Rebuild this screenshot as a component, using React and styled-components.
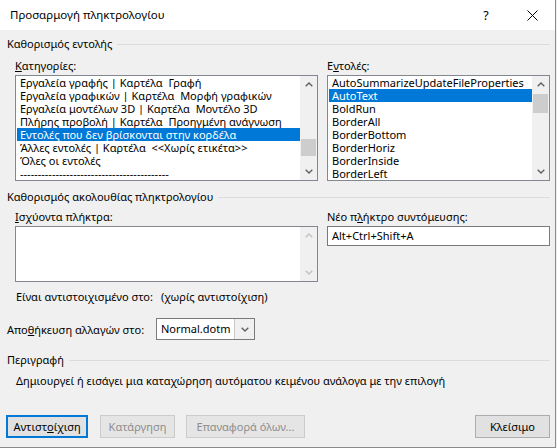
import React from 'react';
import styled, { createGlobalStyle } from 'styled-components';

const Global = createGlobalStyle`
  html, body { margin: 0; padding: 0; background: #f0f0f0; }
  body { font-family: "Noto Sans", "Open Sans", sans-serif; font-size: 11px; color: #000; }
  * { box-sizing: border-box; }
`;

const Window = styled.div`
  width: 556px;
  height: 448px;
  background: #f0f0f0;
  border-right: 1px solid #8a8a8a;
  border-bottom: 1px solid #8a8a8a;
  display: flex;
  flex-direction: column;
  overflow: hidden;
`;

const TitleBar = styled.div`
  height: 30px;
  flex: none;
  background: #fff;
  display: flex;
  align-items: center;
  padding-left: 10px;
`;

const Title = styled.div`
  flex: 1;
  font-size: 11.5px;
  line-height: 16px;
`;

const CaptionButton = styled.div`
  width: 46px;
  height: 30px;
  display: flex;
  align-items: center;
  justify-content: center;
  font-size: 12.5px;
`;

const Content = styled.div`
  flex: 1;
  display: flex;
  flex-direction: column;
  padding: 6px 5px 9px 7px;
`;

const GroupHeader = styled.div`
  display: flex;
  align-items: center;
  gap: 5px;
  height: 16px;
  line-height: 16px;
  white-space: nowrap;
  margin-top: ${p => p.$mt || 0}px;
  &::after {
    content: "";
    flex: 1;
    height: 1px;
    background: #dcdcdc;
  }
`;

const TwoCols = styled.div`
  display: grid;
  grid-template-columns: 303px 1fr;
  column-gap: 9px;
  margin-left: 8px;
  margin-top: ${p => p.$mt || 0}px;
`;

const Col = styled.div`
  display: flex;
  flex-direction: column;
`;

const FieldLabel = styled.div`
  height: 17px;
  line-height: 16px;
  white-space: nowrap;
`;

const ListBox = styled.div`
  height: ${p => p.$h}px;
  border: 1px solid #828790;
  background: #fff;
  display: flex;
`;

const Items = styled.div`
  flex: 1;
  padding: 0 0 0 1px;
  overflow: hidden;
`;

const Item = styled.div`
  height: 13px;
  line-height: 13px;
  padding-left: 3px;
  white-space: pre;
  overflow: hidden;
  background: ${p => (p.$sel ? '#0078d7' : 'transparent')};
  color: ${p => (p.$sel ? '#fff' : '#000')};
`;

const ScrollBar = styled.div`
  width: 17px;
  flex: none;
  background: #f0f0f0;
  display: flex;
  flex-direction: column;
`;

const Arrow = styled.div`
  height: 17px;
  flex: none;
  display: flex;
  align-items: center;
  justify-content: center;
`;

const Track = styled.div`
  flex: 1;
  padding: 0 1px;
`;

const Thumb = styled.div`
  height: ${p => p.$h}px;
  margin-top: ${p => p.$top}px;
  background: #cdcdcd;
`;

const TextInput = styled.div`
  height: 20px;
  border: 1px solid #7a7a7a;
  background: #fff;
  padding-left: 4px;
  line-height: 18px;
`;

const InfoRow = styled.div`
  display: grid;
  grid-template-columns: 145px 1fr;
  margin: 7px 0 0 9px;
  height: 16px;
  line-height: 16px;
  white-space: nowrap;
`;

const SaveRow = styled.div`
  display: flex;
  align-items: center;
  margin-top: 13px;
  height: 22px;
`;

const SaveLabel = styled.div`
  width: 149px;
  white-space: nowrap;
`;

const Select = styled.div`
  width: 99px;
  height: 22px;
  border: 1px solid #7a7a7a;
  background: #fff;
  display: flex;
`;

const SelectValue = styled.div`
  flex: 1;
  padding-left: 4px;
  line-height: 20px;
`;

const SelectButton = styled.div`
  width: 20px;
  border-left: 1px solid #c8c8c8;
  background: #f0f0f0;
  display: flex;
  align-items: center;
  justify-content: center;
`;

const Description = styled.div`
  margin: 5px 0 0 9px;
  height: 16px;
  line-height: 16px;
  white-space: nowrap;
`;

const ButtonRow = styled.div`
  margin-top: auto;
  display: flex;
  align-items: center;
`;

const Button = styled.div`
  width: ${p => p.$w}px;
  height: 23px;
  margin-left: ${p => p.$ml || 0}px;
  display: flex;
  align-items: center;
  justify-content: center;
  white-space: nowrap;
  background: ${p => (p.$disabled ? '#e5e5e5' : '#e1e1e1')};
  border: ${p => (p.$default ? '2px solid #0078d7' : p.$disabled ? '1px solid #cccccc' : '1px solid #adadad')};
  color: ${p => (p.$disabled ? '#8d8d8d' : '#000')};
`;

const Spacer = styled.div`
  flex: 1;
`;

const Chevron = ({ down, color = '#606060' }) => (
  <svg width="8" height="5" viewBox="0 0 8 5">
    <polyline
      points={down ? '0.7,0.8 4,4 7.3,0.8' : '0.7,4.2 4,1 7.3,4.2'}
      fill="none"
      stroke={color}
      strokeWidth="1.4"
    />
  </svg>
);

const VScroll = ({ thumbTop, thumbH, disabled }) => {
  const c = disabled ? '#c2c2c2' : '#606060';
  return (
    <ScrollBar>
      <Arrow><Chevron color={c} /></Arrow>
      <Track>{thumbH ? <Thumb $top={thumbTop} $h={thumbH} /> : null}</Track>
      <Arrow><Chevron down color={c} /></Arrow>
    </ScrollBar>
  );
};

const categories = [
  'Εργαλεία γραφής | Καρτέλα  Γραφή',
  'Εργαλεία γραφικών | Καρτέλα  Μορφή γραφικών',
  'Εργαλεία μοντέλων 3D | Καρτέλα  Μοντέλο 3D',
  'Πλήρης προβολή | Καρτέλα  Προηγμένη ανάγνωση',
  'Εντολές που δεν βρίσκονται στην κορδέλα',
  'Άλλες εντολές | Καρτέλα  <<Χωρίς ετικέτα>>',
  'Όλες οι εντολές',
  '-'.repeat(42),
];

const commands = [
  'AutoSummarizeUpdateFileProperties',
  'AutoText',
  'BoldRun',
  'BorderAll',
  'BorderBottom',
  'BorderHoriz',
  'BorderInside',
  'BorderLeft',
];

export default function App() {
  return (
    <>
      <Global />
      <Window>
        <TitleBar>
          <Title>Προσαρμογή πληκτρολογίου</Title>
          <CaptionButton>?</CaptionButton>
          <CaptionButton>
            <svg width="11" height="11" viewBox="0 0 11 11">
              <path d="M0.5 0.5 L10.5 10.5 M10.5 0.5 L0.5 10.5" stroke="#000" strokeWidth="1" />
            </svg>
          </CaptionButton>
        </TitleBar>
        <Content>
          <GroupHeader>Καθορισμός εντολής</GroupHeader>
          <TwoCols $mt={6}>
            <Col>
              <FieldLabel><u>Κ</u>ατηγορίες:</FieldLabel>
              <ListBox $h={106}>
                <Items>
                  {categories.map((c, i) => (
                    <Item key={i} $sel={i === 4}>{c}</Item>
                  ))}
                </Items>
                <VScroll thumbTop={46} thumbH={17} />
              </ListBox>
            </Col>
            <Col>
              <FieldLabel>Ε<u>ν</u>τολές:</FieldLabel>
              <ListBox $h={106}>
                <Items>
                  {commands.map((c, i) => (
                    <Item key={i} $sel={i === 1}>{c}</Item>
                  ))}
                </Items>
                <VScroll thumbTop={1} thumbH={19} />
              </ListBox>
            </Col>
          </TwoCols>

          <GroupHeader $mt={8}>Καθορισμός ακολουθίας πληκτρολογίου</GroupHeader>
          <TwoCols $mt={4}>
            <Col>
              <FieldLabel><u>Ι</u>σχύοντα πλήκτρα:</FieldLabel>
              <ListBox $h={56}>
                <Items />
                <VScroll disabled />
              </ListBox>
            </Col>
            <Col>
              <FieldLabel>Νέο π<u>λ</u>ήκτρο συντόμευσης:</FieldLabel>
              <TextInput>Alt+Ctrl+Shift+A</TextInput>
            </Col>
          </TwoCols>
          <InfoRow>
            <span>Είναι αντιστοιχισμένο στο:</span>
            <span>(χωρίς αντιστοίχιση)</span>
          </InfoRow>

          <SaveRow>
            <SaveLabel>Απο<u>θ</u>ήκευση αλλαγών στο:</SaveLabel>
            <Select>
              <SelectValue>Normal.dotm</SelectValue>
              <SelectButton><Chevron down /></SelectButton>
            </Select>
          </SaveRow>

          <GroupHeader $mt={12}>Περιγραφή</GroupHeader>
          <Description>Δημιουργεί ή εισάγει μια καταχώρηση αυτόματου κειμένου ανάλογα με την επιλογή</Description>

          <ButtonRow>
            <Button $w={82} $ml={-1} $default>Αντιστ<u>ο</u>ίχιση</Button>
            <Button $w={75} $ml={12} $disabled>Κατάργηση</Button>
            <Button $w={119} $ml={11} $disabled>Επαναφορά όλων...</Button>
            <Spacer />
            <Button $w={75}>Κλείσιμο</Button>
          </ButtonRow>
        </Content>
      </Window>
    </>
  );
}
